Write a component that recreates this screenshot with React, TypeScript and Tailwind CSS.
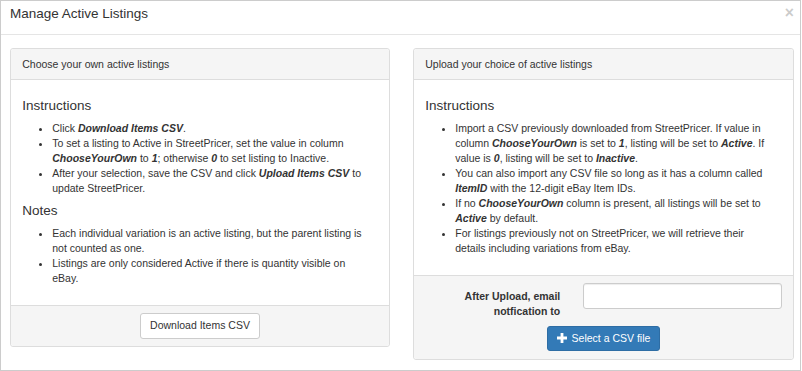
import React from 'react';

const B: React.FC<{ children: React.ReactNode }> = ({ children }) => (
  <strong className="font-bold italic">{children}</strong>
);

interface PanelProps {
  title: string;
  children: React.ReactNode;
  footer: React.ReactNode;
}

const Panel: React.FC<PanelProps> = ({ title, children, footer }) => (
  <div className="rounded-[3px] border border-[#dddddd] bg-white">
    <div className="rounded-t-[3px] border-b border-[#dddddd] bg-[#f5f5f5] px-[11.25px] py-[7.5px] leading-[15px]">
      {title}
    </div>
    <div className="p-[11.25px]">{children}</div>
    <div className="rounded-b-[3px] border-t border-[#dddddd] bg-[#f5f5f5] px-[11.25px] py-[7.5px]">
      {footer}
    </div>
  </div>
);

const Heading: React.FC<{ children: React.ReactNode }> = ({ children }) => (
  <h4 className="mt-[7.5px] mb-[7.5px] text-[13.5px] leading-[14.85px] font-normal">{children}</h4>
);

const List: React.FC<{ children: React.ReactNode }> = ({ children }) => (
  <ul className="mb-[7.5px] list-disc pl-[30px]">{children}</ul>
);

const PlusIcon = () => (
  <svg width="10" height="10" viewBox="0 0 10 10" className="mr-[5px] inline-block">
    <path d="M3.6 0h2.8v3.6H10v2.8H6.4V10H3.6V6.4H0V3.6h3.6z" fill="#fff" />
  </svg>
);

export default function App() {
  return (
    <div className="h-[371px] w-[801px] border border-[#cccccc] bg-white font-['Liberation_Sans',Arial,sans-serif] text-[10.5px] leading-[15px] text-[#333333]">
      <div className="flex h-[34px] items-start justify-between border-b border-[#e5e5e5] pl-[9px] pr-[6px] pt-[3px]">
        <h4 className="text-[13.5px] leading-[19.3px] font-normal">Manage Active Listings</h4>
        <button className="mt-[1px] text-[15.75px] leading-none font-bold text-black opacity-20 [text-shadow:0_1px_0_#fff]">
          ×
        </button>
      </div>

      <div className="grid grid-cols-[380px_381px] items-start gap-x-[23px] pl-[9px] pt-[13px]">
        <Panel
          title="Choose your own active listings"
          footer={
            <div className="flex justify-center">
              <button className="h-[25.5px] rounded-[3px] border border-[#cccccc] bg-white px-[9px] text-[10.5px] leading-[15px] text-[#333333]">
                Download Items CSV
              </button>
            </div>
          }
        >
          <Heading>Instructions</Heading>
          <List>
            <li>
              Click <B>Download Items CSV</B>.
            </li>
            <li>
              To set a listing to Active in StreetPricer, set the value in column <B>ChooseYourOwn</B> to <B>1</B>;
              otherwise <B>0</B> to set listing to Inactive.
            </li>
            <li>
              After your selection, save the CSV and click <B>Upload Items CSV</B> to update StreetPricer.
            </li>
          </List>
          <Heading>Notes</Heading>
          <List>
            <li>Each individual variation is an active listing, but the parent listing is not counted as one.</li>
            <li>
              Listings are only considered Active if there is quantity visible on
              <br />
              eBay.
            </li>
          </List>
        </Panel>

        <Panel
          title="Upload your choice of active listings"
          footer={
            <div>
              <div className="flex">
                <label className="w-[135px] pt-[5.25px] text-right font-bold">
                  After Upload, email notfication to
                </label>
                <input
                  type="text"
                  className="ml-[22.5px] h-[25.5px] flex-1 rounded-[3px] border border-[#cccccc] bg-white px-[9px] shadow-[inset_0_1px_1px_rgba(0,0,0,0.075)] outline-none"
                />
              </div>
              <div className="mt-[7px] flex justify-center">
                <button className="flex h-[25.5px] items-center rounded-[3px] border border-[#2e6da4] bg-[#337ab7] px-[9px] text-[10.5px] leading-[15px] text-white">
                  <PlusIcon />
                  Select a CSV file
                </button>
              </div>
            </div>
          }
        >
          <Heading>Instructions</Heading>
          <List>
            <li>
              Import a CSV previously downloaded from StreetPricer. If value in column <B>ChooseYourOwn</B> is set to{' '}
              <B>1</B>, listing will be set to <B>Active</B>. If value is <B>0</B>, listing will be set to{' '}
              <B>Inactive</B>.
            </li>
            <li>
              You can also import any CSV file so long as it has a column called <B>ItemID</B> with the 12-digit eBay
              Item IDs.
            </li>
            <li>
              If no <B>ChooseYourOwn</B> column is present, all listings will be set to <B>Active</B> by default.
            </li>
            <li>
              For listings previously not on StreetPricer, we will retrieve their
              <br />
              details including variations from eBay.
            </li>
          </List>
        </Panel>
      </div>
    </div>
  );
}
